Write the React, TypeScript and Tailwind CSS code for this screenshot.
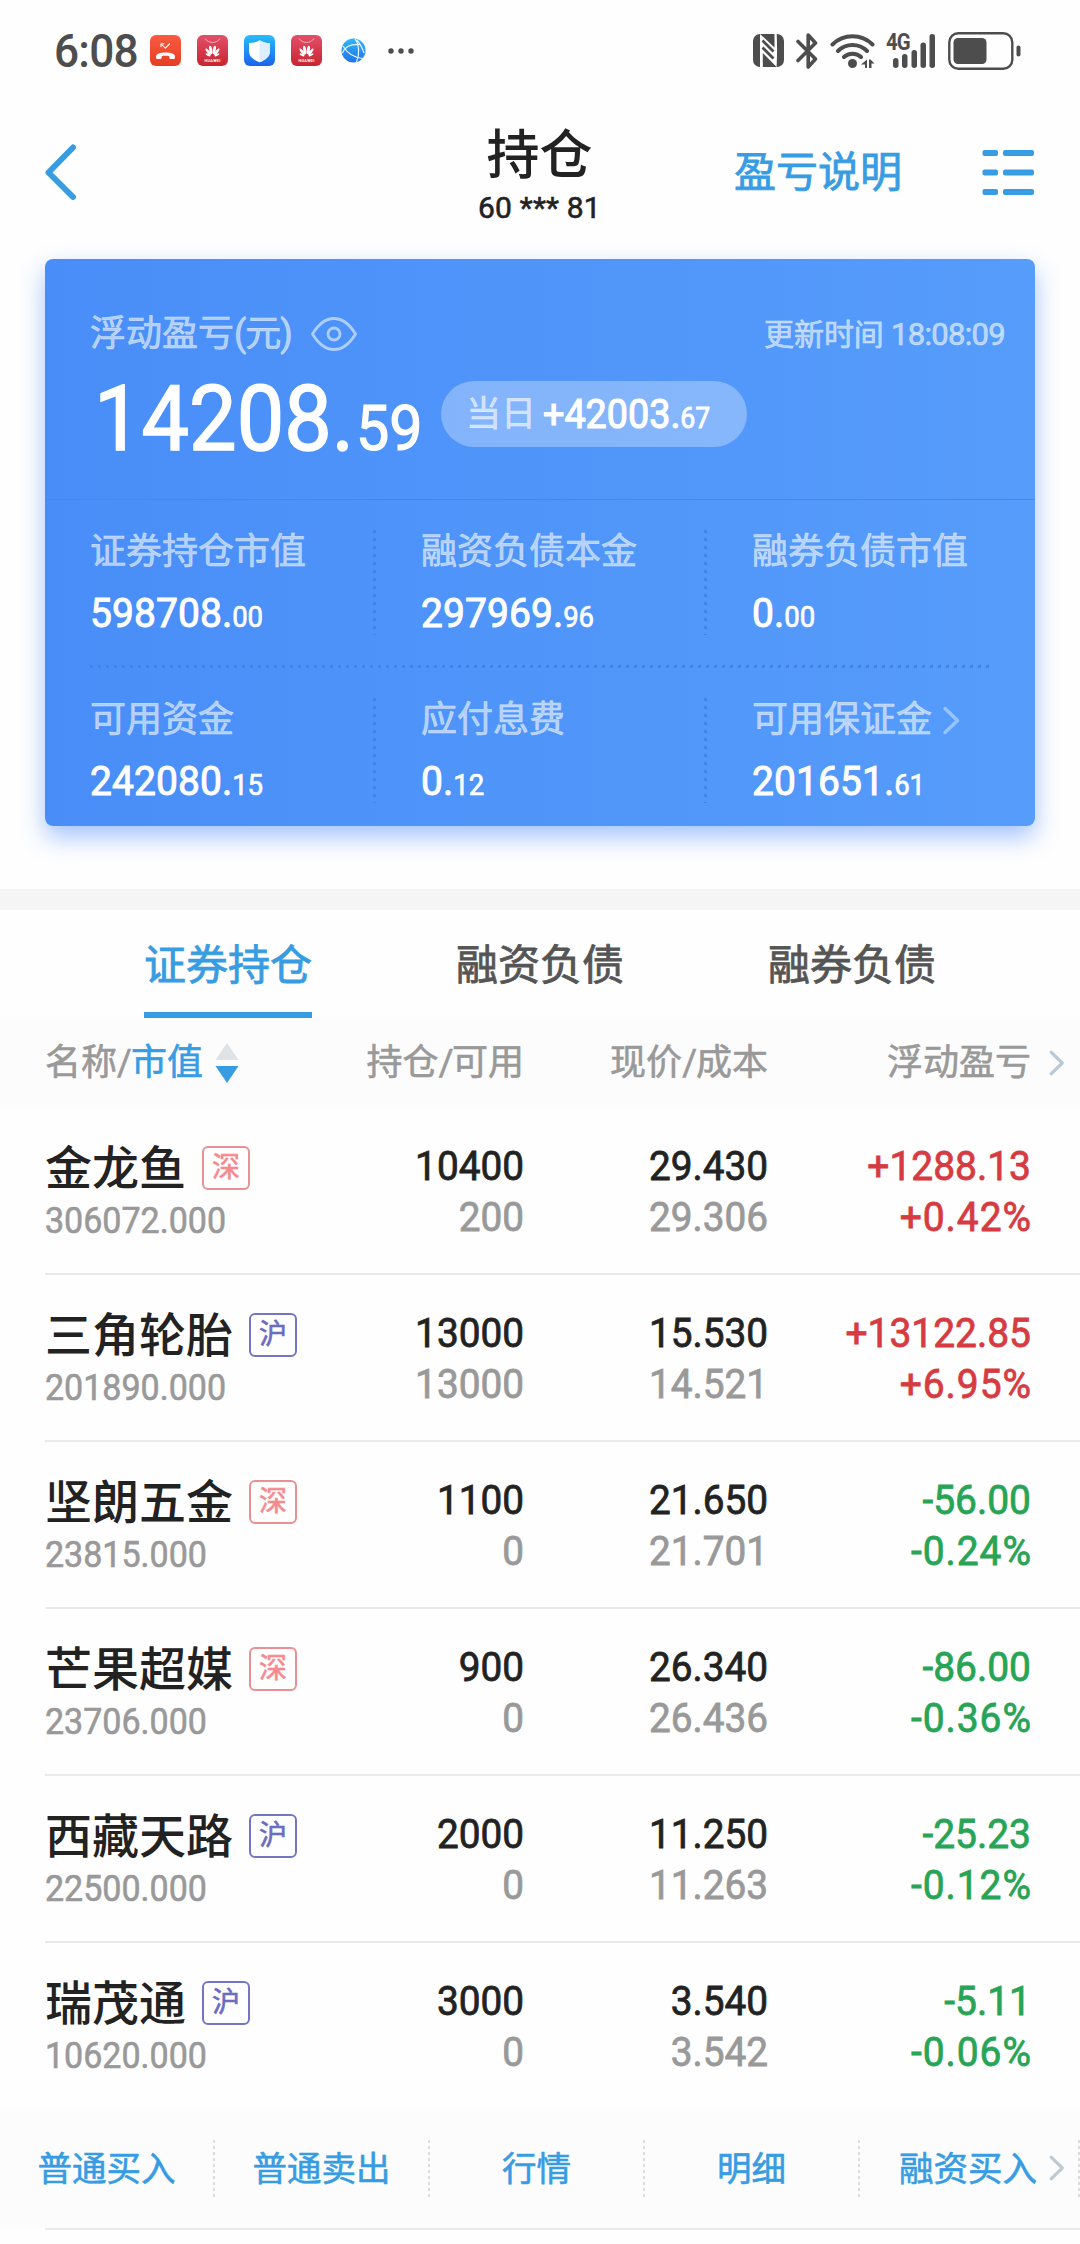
import type { ReactNode } from "react";
import clsx from "clsx";

type Market = "深" | "沪";

type Holding = {
  name: string;
  market: Market;
  value: string;
  amount: string;
  available: string;
  price: string;
  cost: string;
  profit: string;
  rate: string;
};

const holdings: Holding[] = [
  { name: "金龙鱼", market: "深", value: "306072.000", amount: "10400", available: "200", price: "29.430", cost: "29.306", profit: "+1288.13", rate: "+0.42%" },
  { name: "三角轮胎", market: "沪", value: "201890.000", amount: "13000", available: "13000", price: "15.530", cost: "14.521", profit: "+13122.85", rate: "+6.95%" },
  { name: "坚朗五金", market: "深", value: "23815.000", amount: "1100", available: "0", price: "21.650", cost: "21.701", profit: "-56.00", rate: "-0.24%" },
  { name: "芒果超媒", market: "深", value: "23706.000", amount: "900", available: "0", price: "26.340", cost: "26.436", profit: "-86.00", rate: "-0.36%" },
  { name: "西藏天路", market: "沪", value: "22500.000", amount: "2000", available: "0", price: "11.250", cost: "11.263", profit: "-25.23", rate: "-0.12%" },
  { name: "瑞茂通", market: "沪", value: "10620.000", amount: "3000", available: "0", price: "3.540", cost: "3.542", profit: "-5.11", rate: "-0.06%" }
];

const tabs = ["证券持仓", "融资负债", "融券负债"];
const actions = ["普通买入", "普通卖出", "行情", "明细"];

function HuaweiIcon() {
  return (
    <svg width="31" height="31" viewBox="0 0 31 31" aria-hidden>
      <defs>
        <linearGradient id="huawei" x1="0" y1="0" x2="0" y2="1">
          <stop offset="0" stopColor="#e2506a" />
          <stop offset="1" stopColor="#c9242f" />
        </linearGradient>
      </defs>
      <rect width="31" height="31" rx="6" fill="url(#huawei)" />
      <path d="M8 3.500c3.500 5.300 11.500 5.300 15 0" fill="none" stroke="#f6b9c2" strokeWidth="0.900" />
      <g fill="#fff">
        <ellipse cx="13.700" cy="15" rx="1.500" ry="4.300" transform="rotate(-10 13.700 15)" />
        <ellipse cx="17.300" cy="15" rx="1.500" ry="4.300" transform="rotate(10 17.300 15)" />
        <ellipse cx="11.200" cy="16.800" rx="1.400" ry="4" transform="rotate(-36 11.200 16.800)" />
        <ellipse cx="19.800" cy="16.800" rx="1.400" ry="4" transform="rotate(36 19.800 16.800)" />
        <ellipse cx="11" cy="19.800" rx="1.100" ry="2.700" transform="rotate(-66 11 19.800)" />
        <ellipse cx="20" cy="19.800" rx="1.100" ry="2.700" transform="rotate(66 20 19.800)" />
      </g>
      <text x="15.500" y="27.300" fill="#fff" stroke="none" fontSize="3.900" fontWeight="700" textAnchor="middle" textLength="16">HUAWEI</text>
    </svg>
  );
}

function StatusBar() {
  return (
    <div className="flex h-[101px] items-center pl-[54px] pr-[59px] text-[#4d4d4d]">
      <span className="w-[96px] origin-left scale-x-[0.96] text-[46px] font-medium leading-[60px] tracking-[-0.800px] [-webkit-text-stroke:0]">6:08</span>
      <div className="flex items-center gap-4">
        <svg width="31" height="31" viewBox="0 0 31 31" aria-hidden>
          <defs>
            <linearGradient id="missed" x1="0" y1="0" x2="0" y2="1">
              <stop offset="0" stopColor="#fb5b41" />
              <stop offset="1" stopColor="#e63e22" />
            </linearGradient>
          </defs>
          <rect width="31" height="31" rx="6" fill="url(#missed)" />
          <path d="M11 12V8.700h3.300M11.300 9l4 4.300 4.500-4.800" fill="none" stroke="#fff" strokeWidth="1.100" />
          <path d="M6 21.800c0-3 4.200-4.300 9.500-4.300s9.500 1.300 9.500 4.300c0 1.800-.4 2.400-1.700 2.300l-2.700-.2c-1-.1-1.300-.6-1.300-1.500v-1.200c-2-.5-5.600-.5-7.600 0v1.200c0 .9-.3 1.400-1.300 1.500l-2.700.2c-1.300.1-1.700-.5-1.700-2.300z" fill="#fff" />
        </svg>
        <HuaweiIcon />
        <svg width="31" height="31" viewBox="0 0 31 31" aria-hidden>
          <defs>
            <linearGradient id="shield" x1="0" y1="0" x2="0" y2="1">
              <stop offset="0" stopColor="#25bdfb" />
              <stop offset="1" stopColor="#1d62ec" />
            </linearGradient>
          </defs>
          <rect width="31" height="31" rx="6" fill="url(#shield)" />
          <path d="M15.500 5.200c3 2 6.500 2.800 10.500 2.800v8c0 5.500-4.500 9-10.500 11.300C9.500 25 5 21.500 5 16V8c4 0 7.500-.8 10.500-2.800z" fill="#fff" />
          <path d="M15.500 5.200c3 2 6.500 2.800 10.500 2.800v8c0 5.500-4.500 9-10.500 11.300z" fill="#dfeefc" />
        </svg>
        <HuaweiIcon />
        <svg width="31" height="31" viewBox="0 0 31 31" aria-hidden>
          <defs>
            <linearGradient id="globe" x1="0" y1="0" x2="0" y2="1">
              <stop offset="0" stopColor="#2eb7f8" />
              <stop offset="1" stopColor="#2272ea" />
            </linearGradient>
          </defs>
          <circle cx="15.500" cy="15.500" r="12" fill="url(#globe)" />
          <path d="M4.500 18c2-5.500 8-9 17-8.500M5 11c4 7 10 11.500 20 12.500M17 4c4 5 5 15 1.500 23M18.500 5c4 4 6 8 7.500 13" fill="none" stroke="#e8f6ff" strokeWidth="1.200" />
        </svg>
      </div>
      <svg className="ml-[19px]" width="26" height="6" viewBox="0 0 26 6" fill="currentColor" aria-hidden>
        <circle cx="3" cy="3" r="2.700" />
        <circle cx="13" cy="3" r="2.700" />
        <circle cx="23" cy="3" r="2.700" />
      </svg>

      <svg className="ml-auto" width="31" height="33" viewBox="0 0 31 33" aria-hidden>
        <rect width="31" height="33" rx="7" fill="currentColor" />
        <path d="M7 0L21.500 13.500V0H23.700V33L9.800 19V33H7z" fill="#fefefe" />
        <path d="M9.500 6.500L20.500 17.500M9.500 13.500L20.500 24.500" fill="none" stroke="currentColor" strokeWidth="2.800" />
        <path d="M8.500 2c-1 8-1 20 .3 30M22.500 1c1 8 1 22-.2 30" fill="none" stroke="#fefefe" strokeWidth="1.400" />
      </svg>
      <svg className="ml-3" width="22" height="36" viewBox="0 0 22 36" fill="none" stroke="currentColor" strokeWidth="3.600" strokeLinejoin="round" strokeLinecap="round" aria-hidden>
        <path d="M2 8.500l17.500 17.500-7.300 8V2l7.300 8L2 27.500" />
      </svg>
      <svg className="ml-3" width="45" height="36" viewBox="0 0 45 36" fill="none" stroke="currentColor" strokeWidth="4" strokeLinecap="round" aria-hidden>
        <path d="M2.500 11.500c11-11 29-11 40 0M8 18c8-8 21-8 29 0M14 24c4.500-4.500 12.500-4.500 17 0" />
        <circle cx="22.500" cy="30.500" r="4.500" fill="currentColor" stroke="none" />
        <path d="M37 26.500v8.500h-2v-3.500h-4zM39 35v-8.500h1.500l4 4h-3v4.500z" fill="currentColor" stroke="none" />
      </svg>
      <div className="relative ml-[11px] h-[36px] w-[50px]">
        <span className="absolute left-0 top-0 origin-left scale-x-[0.85] text-[24px] font-bold leading-[19px] tracking-[-1px] [-webkit-text-stroke:0]">4G</span>
        <svg width="50" height="36" viewBox="0 0 50 36" fill="currentColor" aria-hidden>
          <rect x="7" y="25" width="5.500" height="10" rx="2.700" />
          <rect x="16" y="21" width="5.500" height="14" rx="2.700" />
          <rect x="25.500" y="17" width="5.500" height="18" rx="2.700" />
          <rect x="34.500" y="9.500" width="5.500" height="25.500" rx="2.700" />
          <rect x="43.500" y="1" width="5.500" height="34" rx="2.700" />
        </svg>
      </div>
      <svg className="ml-3" width="73" height="38" viewBox="0 0 73 38" fill="currentColor" aria-hidden>
        <rect x="1.300" y="1.300" width="63" height="35.400" rx="9" fill="none" stroke="currentColor" strokeWidth="2.400" />
        <rect x="5.500" y="6" width="33" height="26" rx="4.500" />
        <rect x="68.500" y="13.500" width="4" height="11" rx="2" />
      </svg>
    </div>
  );
}

function Header() {
  return (
    <header className="mb-[15px] grid h-[143px] grid-cols-[1fr_auto_1fr] items-center pl-[44px] pr-[45px]">
      <svg width="34" height="60" viewBox="0 0 34 60" fill="none" stroke="#389ce3" strokeWidth="6" strokeLinejoin="round" strokeLinecap="round" aria-hidden>
        <path d="M29 4.500L4.500 29.500 29 54" />
      </svg>
      <div className="text-center text-[#222]">
        <h1 className="mt-[6px] text-[53px] font-medium leading-[56px] [-webkit-text-stroke:0]">持仓</h1>
        <p className="mt-[9px] text-[30px] leading-[30px] tracking-[0.200px]">60 *** 81</p>
      </div>
      <div className="flex items-center justify-end text-[#389ce3]">
        <span className="mt-[1px] text-[42px] leading-[60px] [-webkit-text-stroke:0.8px]">盈亏说明</span>
        <svg className="ml-[80px]" width="53" height="46" viewBox="0 0 53 46" fill="currentColor" aria-hidden>
          {[0, 19.5, 39].map((y) => (
            <g key={y}>
              <rect x="0.500" y={y} width="15.500" height="6" rx="2" />
              <rect x="21" y={y} width="31" height="6" rx="2" />
            </g>
          ))}
        </svg>
      </div>
    </header>
  );
}

function Stat({ label, value, children }: { label: string; value: string; children?: ReactNode }) {
  const [whole, decimals] = value.split(".");
  return (
    <div>
      <p className="flex items-center text-[36px] leading-[44px] text-white/55">
        {label}
        {children}
      </p>
      <p className="mt-[17px] origin-left scale-x-[0.95] text-[41px] leading-[44px] tracking-[0.100px] text-white [-webkit-text-stroke:1px]">
        {whole}.<span className="text-[29px] tracking-[-0.200px] [-webkit-text-stroke:0.7px]">{decimals}</span>
      </p>
    </div>
  );
}

function VerticalDots() {
  return <i className="h-[105px] w-[3px] bg-[repeating-linear-gradient(to_bottom,#4084e6_0_3px,transparent_3px_8px)]" />;
}

function SummaryCard() {
  return (
    <section className="mx-[45px] h-[567px] rounded-lg bg-linear-to-r from-[#498ef8] to-[#569cfb] shadow-[0_11px_24px_rgba(64,132,250,0.48)]">
      <div className="h-[241px] border-b border-[#4488ea] pl-[45px] pr-[30px] pt-[50px]">
        <div className="flex h-[49px] items-center justify-between text-white/55">
          <div className="flex items-center">
            <span className="mt-[2px] text-[36px] leading-[49px]">浮动盈亏<span className="tracking-[-1px]">(元)</span></span>
            <svg className="ml-[19px]" width="46" height="34" viewBox="0 0 46 34" fill="none" stroke="currentColor" strokeWidth="2.800" strokeLinejoin="round" aria-hidden>
              <path d="M1.500 17C7 8 14 1.500 23 1.500S39 8 44.500 17C39 26 32 32.500 23 32.500S7 26 1.500 17z" />
              <circle cx="23" cy="17" r="6" />
            </svg>
          </div>
          <p className="mt-[1px] text-[31px] leading-[49px] tracking-[-0.700px]"><span className="text-[30px] tracking-[-0.100px]">更新时间 </span>18:08:09</p>
        </div>
        <div className="mt-[23px] flex h-[66px] items-start">
          <p className="ml-[4px] w-[347px] origin-left scale-x-[0.94] whitespace-nowrap text-[90px] leading-[77px] text-white [-webkit-text-stroke:1.600px]">
            14208.<span className="ml-[2px] text-[63px] [-webkit-text-stroke:1.200px]">59</span>
          </p>
          <div className="flex h-[66px] w-[306px] items-center rounded-full bg-white/30 pl-[25px]">
            <span className="mt-[2px] text-[35px] leading-[66px] text-white/60">当日</span>
            <span className="ml-[7px] mt-[3px] origin-left scale-x-[0.92] text-[41px] leading-[66px] text-white [-webkit-text-stroke:1.200px]">
              +42003.<span className="text-[29px] [-webkit-text-stroke:0.8px]">67</span>
            </span>
          </div>
        </div>
      </div>

      <div className="px-[45px] pt-[30px]">
        <div className="grid h-[105px] grid-cols-[283px_48px_283px_48px_1fr]">
          <Stat label="证券持仓市值" value="598708.00" />
          <VerticalDots />
          <Stat label="融资负债本金" value="297969.96" />
          <VerticalDots />
          <Stat label="融券负债市值" value="0.00" />
        </div>
        <div className="my-[30px] h-[3px] bg-[repeating-linear-gradient(to_right,#4084e6_0_3px,transparent_3px_8px)]" />
        <div className="grid h-[105px] grid-cols-[283px_48px_283px_48px_1fr]">
          <Stat label="可用资金" value="242080.15" />
          <VerticalDots />
          <Stat label="应付息费" value="0.12" />
          <VerticalDots />
          <Stat label="可用保证金" value="201651.61">
            <Chevron className="ml-[10px] h-[29px] w-[18px] text-white/40" />
          </Stat>
        </div>
      </div>
    </section>
  );
}

function Chevron({ className }: { className?: string }) {
  return (
    <svg className={className} viewBox="0 0 18 29" fill="none" stroke="currentColor" strokeWidth="3.500" strokeLinecap="round" strokeLinejoin="round" aria-hidden>
      <path d="M3 2.500L15.500 14.500 3 26.500" />
    </svg>
  );
}

function HoldingRow({ item, last }: { item: Holding; last: boolean }) {
  return (
    <div className={clsx("ml-[45px] grid grid-cols-[285px_194px_244px_263px]", last ? "h-[165px]" : "h-[167px] border-b-2 border-[#e9e9e9]")}>
      <div className="whitespace-nowrap pt-[38px]">
        <div className="flex h-[44px] items-center">
          <span className="mt-[2px] text-[47px] font-medium leading-[44px] text-[#222] [-webkit-text-stroke:0]">{item.name}</span>
          <span
            className={clsx(
              "ml-4 flex h-[44px] w-[48px] items-center justify-center rounded-[6px] border-2 text-[28px] leading-[42px]",
              item.market === "深" ? "border-[#ea8f94] text-[#f5898e]" : "border-[#7476c4] text-[#6a6cc0]"
            )}
          >
            {item.market}
          </span>
        </div>
        <p className="mt-[13px] origin-left scale-x-[0.945] text-[36px] leading-[36px] text-[#999]">{item.value}</p>
      </div>
      <Pair top={item.amount} bottom={item.available} />
      <Pair top={item.price} bottom={item.cost} />
      <div
        className={clsx(
          "origin-right scale-x-[0.95] pt-[33px] text-right text-[41px] leading-[51px] [-webkit-text-stroke:0.8px]",
          item.profit.startsWith("+") ? "text-[#d63b42]" : "text-[#27a455]"
        )}
      >
        <p>{item.profit}</p>
        <p className="-mr-px tracking-[1px]">{item.rate}</p>
      </div>
    </div>
  );
}

function Pair({ top, bottom }: { top: string; bottom: string }) {
  return (
    <div className="origin-right scale-x-[0.945] pt-[33px] text-right text-[41px] leading-[51px] [-webkit-text-stroke:0.8px]">
      <p className="text-[#222]">{top}</p>
      <p className="text-[#999]">{bottom}</p>
    </div>
  );
}

export default function App() {
  return (
    <main className="min-h-[2244px] w-[1080px] overflow-hidden bg-[#fefefe] font-[Roboto,'Noto_Sans_CJK_SC',sans-serif] [-webkit-text-stroke:0.6px]">
      <StatusBar />
      <Header />
      <SummaryCard />

      <div className="mt-[63px] h-[21px] bg-[#f5f5f5]" />

      <nav className="flex h-[108px] px-[72px]">
        {tabs.map((tab, index) => (
          <div key={tab} className="flex flex-1 justify-center">
            <span
              className={clsx(
                "h-[108px] border-b-[6px] pt-[7px] text-[42px] leading-[98px] [-webkit-text-stroke:0.8px]",
                index === 0 ? "border-[#389ce3] text-[#389ce3]" : "border-transparent text-[#555]"
              )}
            >
              {tab}
            </span>
          </div>
        ))}
      </nav>

      <div className="grid h-[90px] grid-cols-[285px_194px_244px_263px_1fr] items-center bg-[#fcfcfc] pl-[45px] text-right text-[36px] leading-[60px] text-[#999]">
        <div className="flex items-center">
          名称<span className="tracking-[-1px]">/</span><span className="text-[#389ce3]">市值</span>
          <svg className="ml-[12px]" width="24" height="40" viewBox="0 0 24 40" aria-hidden>
            <path d="M12 0l11.500 17H.500z" fill="#dfe3e6" />
            <path d="M12 40L.500 23h23z" fill="#389ce3" />
          </svg>
        </div>
        <span>持仓<span className="tracking-[-1.500px]">/</span>可用</span>
        <span>现价<span className="tracking-[-1px]">/</span>成本</span>
        <span>浮动盈亏</span>
        <Chevron className="ml-[17px] h-[26px] w-[17px] text-[#b9c8d6]" />
      </div>

      {holdings.map((item, index) => (
        <HoldingRow key={item.name} item={item} last={index === holdings.length - 1} />
      ))}

      <div className="flex h-[120px] items-center bg-[#fcfcfc] text-[34.500px] leading-[60px] text-[#389ce3]">
        {actions.map((action) => (
          <div key={action} className="flex h-[57px] w-[215px] items-center">
            <span className="mt-[2px] flex-1 text-center">{action}</span>
            <i className="h-[57px] w-[2px] bg-[repeating-linear-gradient(to_bottom,#dcdcdc_0_3px,transparent_3px_6px)]" />
          </div>
        ))}
        <span className="ml-[39px] mt-[2px]">融资买入</span>
        <Chevron className="ml-[11px] h-[26px] w-[17px] text-[#bfc9d4]" />
        <i className="ml-auto h-[57px] w-[2px] bg-[repeating-linear-gradient(to_bottom,#dcdcdc_0_3px,transparent_3px_6px)]" />
      </div>
      <div className="ml-[45px] h-[2px] bg-[#e9e9e9]" />
    </main>
  );
}
